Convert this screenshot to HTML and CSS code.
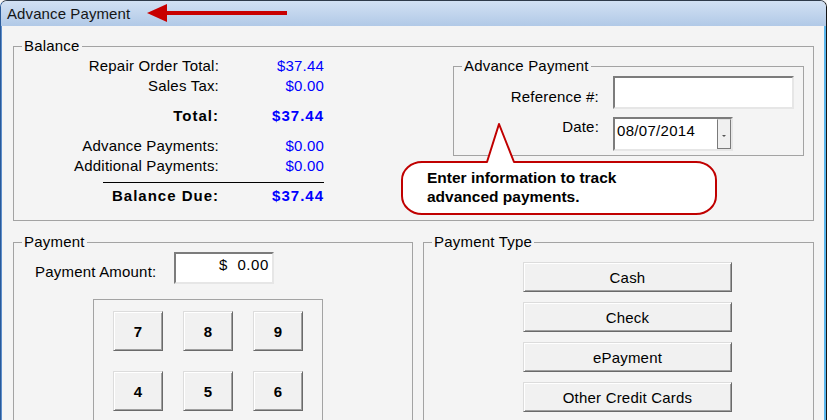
FILE: index.html
```html
<!DOCTYPE html>
<html lang="en">
<head>
<meta charset="utf-8">
<title>Advance Payment</title>
<link rel="stylesheet" href="styles.css">
</head>
<body>
<div class="window">
  <div class="titlebar">
    <span class="title">Advance Payment</span>
    <svg class="title-arrow" width="142" height="20" viewBox="0 0 142 20" aria-hidden="true">
      <path d="M18 10 H140" stroke="#c80000" stroke-width="4"/>
      <path d="M0 10 L20 1 L20 19 Z" fill="#c80000"/>
    </svg>
  </div>
  <div class="client">
    <fieldset class="group balance">
      <legend>Balance</legend>
      <div class="balance-body">
        <div class="totals">
          <div class="row"><span class="lbl">Repair Order Total:</span><span class="val">$37.44</span></div>
          <div class="row"><span class="lbl">Sales Tax:</span><span class="val">$0.00</span></div>
          <div class="row strong gap"><span class="lbl">Total:</span><span class="val">$37.44</span></div>
          <div class="row gap"><span class="lbl">Advance Payments:</span><span class="val">$0.00</span></div>
          <div class="row"><span class="lbl">Additional Payments:</span><span class="val">$0.00</span></div>
          <div class="rule"></div>
          <div class="row strong due"><span class="lbl">Balance Due:</span><span class="val">$37.44</span></div>
        </div>
        <fieldset class="group advance">
          <legend>Advance Payment</legend>
          <div class="field-row ref">
            <span class="field-lbl">Reference #:</span>
            <div class="textbox"></div>
          </div>
          <div class="field-row date">
            <span class="field-lbl">Date:</span>
            <div class="datebox">
              <span class="date-text">08/07/2014</span>
              <span class="dd-btn"><span class="dd-arrow"></span></span>
            </div>
          </div>
        </fieldset>
      </div>
    </fieldset>

    <div class="lower">
      <fieldset class="group payment">
        <legend>Payment</legend>
        <div class="amount-row">
          <span class="amount-lbl">Payment Amount:</span>
          <div class="amount-box">$&nbsp;&nbsp;0.00</div>
        </div>
        <div class="keypad">
          <button class="btn key">7</button>
          <button class="btn key">8</button>
          <button class="btn key">9</button>
          <button class="btn key">4</button>
          <button class="btn key">5</button>
          <button class="btn key">6</button>
        </div>
      </fieldset>
      <fieldset class="group ptype">
        <legend>Payment Type</legend>
        <div class="type-list">
          <button class="btn type">Cash</button>
          <button class="btn type">Check</button>
          <button class="btn type">ePayment</button>
          <button class="btn type">Other Credit Cards</button>
        </div>
      </fieldset>
    </div>
  </div>

  <div class="callout">
    <svg class="callout-shape" width="320" height="95" viewBox="0 0 320 95" aria-hidden="true">
      <path d="M23 40 L88 40 L100 2 L115 40 L297 40 A20 18 0 0 1 317 58 L317 74 A20 18 0 0 1 297 92 L23 92 A20 18 0 0 1 3 74 L3 58 A20 18 0 0 1 23 40 Z"
            fill="#ffffff" stroke="#c00000" stroke-width="2" stroke-linejoin="round"/>
    </svg>
    <div class="callout-text">Enter information to track<br>advanced payments.</div>
  </div>
</div>
</body>
</html>
```

FILE: styles.css
```css
html, body {
  margin: 0;
  padding: 0;
}

body {
  width: 827px;
  height: 420px;
  overflow: hidden;
  font-family: "Liberation Sans", Arial, sans-serif;
  font-size: 15px;
  letter-spacing: 0.2px;
  color: #000;
  background: #f4f4f4;
}

.window {
  position: relative;
  box-sizing: border-box;
  height: 420px;
  border: 1px solid #2f3b4a;
  border-left-color: #2a5a99;
  border-right-color: #141414;
  border-bottom: 0;
  border-radius: 7px 7px 0 0;
  overflow: hidden;
  display: flex;
  flex-direction: column;
  background: #f4f4f4;
}

.titlebar {
  height: 25px;
  flex: none;
  display: flex;
  align-items: center;
  padding-left: 6px;
  background: linear-gradient(#d2e1f3, #b1c9e7);
}

.title {
  font-size: 15px;
  letter-spacing: 0.1px;
  color: #151515;
  line-height: 25px;
}

.title-arrow {
  display: block;
  margin-left: 17px;
  margin-top: -1px;
}

.client {
  flex: 1;
  display: flex;
  flex-direction: column;
  border-left: 1px solid #5d8ecb;
  border-right: 2px solid #5ab6ec;
  padding: 0 10px 0 11px;
  background: #f4f4f4;
}

/* group boxes */
fieldset.group {
  box-sizing: border-box;
  margin: 0;
  padding: 0;
  min-width: 0;
  border: 1px solid #a3a3a3;
}

fieldset.group > legend {
  margin-left: 8px;
  padding: 0 2px;
  font-size: 15px;
  line-height: 16px;
}

fieldset.balance {
  margin-top: 12px;
}

.balance-body {
  display: flex;
  align-items: flex-start;
}

.totals {
  padding: 2px 0 14px 0;
}

.row {
  display: flex;
  height: 20px;
  line-height: 20px;
}

.row .lbl {
  width: 205px;
  text-align: right;
}

.row .val {
  width: 105px;
  text-align: right;
  color: #0000ff;
}

.row.strong {
  font-weight: bold;
  letter-spacing: 1px;
}

.row.gap {
  margin-top: 10px;
}

.rule {
  width: 221px;
  height: 1px;
  margin: 6px 0 0 89px;
  background: #000;
}

.row.due {
  margin-top: 3px;
}

/* advance payment group */
fieldset.advance {
  width: 351px;
  margin: 4px 9px 0 auto;
  padding-bottom: 4px;
}

.field-row {
  display: flex;
  align-items: flex-start;
}

.field-row.ref {
  margin-top: 2px;
}

.field-row.date {
  margin-top: 8px;
}

.field-lbl {
  width: 145px;
  margin-right: 14px;
  text-align: right;
  line-height: 20px;
}

.field-row.ref .field-lbl {
  margin-top: 11px;
}

.textbox {
  box-sizing: border-box;
  width: 181px;
  height: 33px;
  background: #fff;
  border: 2px solid;
  border-color: #7c7c7c #e6e6e6 #e6e6e6 #7c7c7c;
}

.datebox {
  box-sizing: border-box;
  width: 120px;
  height: 34px;
  display: flex;
  background: #fff;
  border: 2px solid;
  border-color: #7c7c7c #e6e6e6 #e6e6e6 #7c7c7c;
}

.date-text {
  flex: 1;
  padding: 2px 0 0 2px;
  line-height: 20px;
  letter-spacing: 0.3px;
}

.dd-btn {
  box-sizing: border-box;
  width: 14px;
  border: 1px solid #7a7a7a;
  border-top-color: #e0e0e0;
  background: #f0f0f0;
  display: flex;
  justify-content: center;
  align-items: flex-start;
  padding-top: 15px;
}

.dd-arrow {
  width: 0;
  height: 0;
  border-left: 2px solid transparent;
  border-right: 2px solid transparent;
  border-top: 2px solid #555;
}

/* lower area */
.lower {
  display: flex;
  gap: 10px;
  margin-top: 13px;
}

fieldset.payment {
  width: 400px;
  height: 220px;
  flex: none;
}

fieldset.ptype {
  width: 391px;
  height: 220px;
  flex: none;
}

.amount-row {
  display: flex;
  align-items: flex-start;
  margin-top: 2px;
}

.amount-lbl {
  width: 139px;
  margin-left: 21px;
  margin-top: 10px;
  line-height: 20px;
}

.amount-box {
  box-sizing: border-box;
  width: 100px;
  height: 32px;
  padding: 1px 3px 0 0;
  line-height: 20px;
  text-align: right;
  letter-spacing: 0.6px;
  background: #fff;
  border: 2px solid;
  border-color: #7c7c7c #e6e6e6 #e6e6e6 #7c7c7c;
}

.keypad {
  box-sizing: border-box;
  width: 230px;
  height: 140px;
  margin: 15px 0 0 79px;
  padding: 11px 0 0 19px;
  border: 1px solid #a3a3a3;
  display: grid;
  grid-template-columns: repeat(3, 50px);
  grid-auto-rows: 40px;
  gap: 20px;
  align-content: start;
}

.btn {
  box-sizing: border-box;
  margin: 0;
  padding: 0;
  font-family: inherit;
  color: #000;
  background: #f1f1f1;
  border: 1px solid;
  border-color: #dcdcdc #6a6a6a #6a6a6a #dcdcdc;
  box-shadow: inset 1px 1px 0 #ffffff, inset -1px -1px 0 #a0a0a0;
}

.key {
  width: 50px;
  height: 40px;
  font-size: 15px;
  font-weight: bold;
}

.type-list {
  display: flex;
  flex-direction: column;
  gap: 10px;
  margin: 12px 0 0 99px;
}

.type {
  width: 209px;
  height: 30px;
  font-size: 15px;
  letter-spacing: 0.2px;
}

/* annotation callout */
.callout {
  position: absolute;
  left: 398px;
  top: 121px;
  width: 320px;
  height: 95px;
  display: grid;
}

.callout-shape,
.callout-text {
  grid-area: 1 / 1;
}

.callout-shape {
  display: block;
}

.callout-text {
  padding: 46px 0 0 28px;
  font-size: 15.5px;
  font-weight: bold;
  line-height: 19px;
  letter-spacing: 0;
  color: #000;
}
```
